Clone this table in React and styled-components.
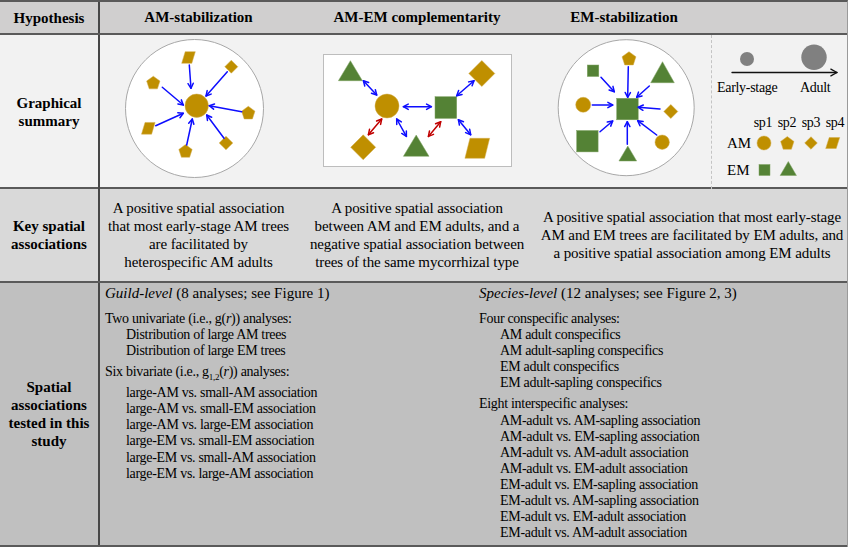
import React from 'react';
import styled, { createGlobalStyle } from 'styled-components';

const GOLD = '#bf8f00';
const GREEN = '#548235';
const BLUE = '#0d0dff';
const RED = '#c00000';
const GREY = '#808080';

const Global = createGlobalStyle`
  html, body { margin: 0; padding: 0; background: #fff; }
  body { font-family: "Liberation Serif", "Times New Roman", Times, serif; color: #000; }
`;

const Table = styled.div`
  width: 847px;
  font-family: "Liberation Serif", "Times New Roman", Times, serif;
  border-top: 2px solid #5a5a5a;
  border-right: 1px solid #9a9a9a;
`;

const Row = styled.div`
  display: grid;
  grid-template-columns: ${(p) => p.$cols};
  height: ${(p) => p.$h}px;
  background: ${(p) => p.$bg};
  border-bottom: 2px solid #5a5a5a;
`;

const LabelCell = styled.div`
  border-right: 2px solid #474747;
  display: flex;
  align-items: center;
  justify-content: center;
  text-align: center;
  font-weight: bold;
  font-size: 15px;
  line-height: 18px;
  white-space: nowrap;
`;

const HeadCell = styled.div`
  display: flex;
  align-items: center;
  justify-content: center;
  font-weight: bold;
  font-size: 15px;
  white-space: nowrap;
`;

const DiagramCell = styled.div`
  padding: ${(p) => p.$pad};
`;

const LegendCell = styled.div`
  border-left: 1px dashed #c4c4c4;
  display: flex;
  flex-direction: column;
`;

const StageLabels = styled.div`
  display: grid;
  grid-template-columns: 83px auto;
  padding-left: 5px;
  height: 16px;
  line-height: 16px;
  font-size: 14px;
  letter-spacing: -0.3px;
  white-space: nowrap;
`;

const SymGrid = styled.div`
  margin-top: 17px;
  padding-left: 15px;
  display: grid;
  grid-template-columns: 24px repeat(4, 24px);
  grid-template-rows: 20px 20px 34px;
  align-items: center;
  justify-items: center;
`;

const SpLabel = styled.span`
  font-size: 14px;
  letter-spacing: -0.3px;
  white-space: nowrap;
`;

const TypeLabel = styled.span`
  justify-self: start;
  font-size: 15px;
`;

const KeyText = styled.div`
  display: flex;
  align-items: center;
  justify-content: center;
  text-align: center;
  font-size: 15px;
  line-height: 18px;
  letter-spacing: -0.1px;
  white-space: nowrap;
  grid-column: ${(p) => (p.$span ? `span ${p.$span}` : 'auto')};
`;

const SpatialCol = styled.div`
  padding: 2px 0 0 ${(p) => p.$pl}px;
`;

const Heading = styled.div`
  font-size: 15px;
  line-height: 17px;
  white-space: nowrap;
`;

const Group = styled.div`
  margin-top: ${(p) => p.$mt}px;
  font-size: 14px;
  letter-spacing: -0.3px;
  line-height: 16.1px;
  white-space: nowrap;
`;

const Item = styled.div`
  padding-left: 21px;
`;

const Sub = styled.sub`
  font-size: 9px;
`;

/* ---------- SVG shape helpers ---------- */
const pts = (arr) => arr.map((p) => p.map((v) => v.toFixed(2)).join(',')).join(' ');
const edge = (c) => (c === GOLD ? '#d2ad4c' : '#7fa263');

const Pentagon = ({ cx, cy, r, c = GOLD }) => {
  const p = [];
  for (let i = 0; i < 5; i++) {
    const a = ((-90 + 72 * i) * Math.PI) / 180;
    p.push([cx + r * Math.cos(a), cy + r * Math.sin(a)]);
  }
  return <polygon points={pts(p)} fill={c} stroke={edge(c)} strokeWidth="0.5" />;
};

const Diamond = ({ cx, cy, r, c = GOLD }) => (
  <polygon
    points={pts([[cx, cy - r], [cx + r, cy], [cx, cy + r], [cx - r, cy]])}
    fill={c}
    stroke={edge(c)}
    strokeWidth="0.5"
  />
);

const Para = ({ cx, cy, w, h, s, c = GOLD }) => (
  <polygon
    points={pts([
      [cx - w / 2 + s, cy - h / 2],
      [cx + w / 2, cy - h / 2],
      [cx + w / 2 - s, cy + h / 2],
      [cx - w / 2, cy + h / 2],
    ])}
    fill={c}
    stroke={edge(c)}
    strokeWidth="0.5"
  />
);

const Tri = ({ cx, top, bot, w, c = GREEN }) => (
  <polygon
    points={pts([[cx, top], [cx + w / 2, bot], [cx - w / 2, bot]])}
    fill={c}
    stroke={edge(c)}
    strokeWidth="0.5"
  />
);

const Sq = ({ x, y, s, c = GREEN }) => (
  <rect x={x} y={y} width={s} height={s} fill={c} stroke={edge(c)} strokeWidth="0.5" />
);

const Dot = ({ cx, cy, r, c = GOLD }) => (
  <circle cx={cx} cy={cy} r={r} fill={c} stroke={c === GREY ? 'none' : edge(c)} strokeWidth="0.5" />
);

const head = (x1, y1, x2, y2, len = 5.5, ang = 0.5) => {
  const a = Math.atan2(y2 - y1, x2 - x1);
  const p1 = [x2 - len * Math.cos(a - ang), y2 - len * Math.sin(a - ang)];
  const p2 = [x2 - len * Math.cos(a + ang), y2 - len * Math.sin(a + ang)];
  return `M${p1[0].toFixed(2)},${p1[1].toFixed(2)} L${x2},${y2} L${p2[0].toFixed(2)},${p2[1].toFixed(2)}`;
};

const Arrow = ({ x1, y1, x2, y2, c = BLUE, both = false, w = 1.5, len = 5.5 }) => (
  <g stroke={c} strokeWidth={w} fill="none" strokeLinecap="round" strokeLinejoin="round">
    <line x1={x1} y1={y1} x2={x2} y2={y2} />
    <path d={head(x1, y1, x2, y2, len)} />
    {both && <path d={head(x2, y2, x1, y1, len)} />}
  </g>
);

/* ---------- Diagrams ---------- */
const DiagramA = () => (
  <svg width="150" height="150" viewBox="0 0 150 150">
    <circle cx="74.5" cy="73.5" r="69" fill="#fff" stroke="#a8a8a8" strokeWidth="1" />
    <Dot cx={76.7} cy={70.7} r={11.7} />
    <Para cx={68.5} cy={22.5} w={13.6} h={11.7} s={3.5} />
    <Diamond cx={111.3} cy={31.7} r={6.5} />
    <Pentagon cx={33.3} cy={48.2} r={7} />
    <Pentagon cx={128.3} cy={78.3} r={7} />
    <Para cx={28.3} cy={93.3} w={13.6} h={11.7} s={3.5} />
    <Pentagon cx={65.5} cy={116.6} r={7} />
    <Diamond cx={106} cy={108} r={6.8} />
    <Arrow x1={69.3} y1={30} x2={71} y2={53.3} />
    <Arrow x1={107.3} y1={36.7} x2={86} y2={61} />
    <Arrow x1={42.3} y1={52.3} x2={63.3} y2={70} />
    <Arrow x1={121.7} y1={76.7} x2={89.3} y2={70.7} />
    <Arrow x1={35.7} y1={90.7} x2={63.3} y2={78.3} />
    <Arrow x1={66.7} y1={110} x2={72.3} y2={84} />
    <Arrow x1={104} y1={103.3} x2={86.7} y2={80} />
  </svg>
);

const DiagramB = () => (
  <svg width="190" height="114" viewBox="0 0 190 114">
    <rect x="0.5" y="0.5" width="188" height="112" fill="#fff" stroke="#bdbdbd" strokeWidth="1" />
    <g transform="translate(1,1)">
      <Tri cx={26.4} top={5.7} bot={25.7} w={24} />
      <Dot cx={63} cy={51} r={12} />
      <Sq x={111} y={41.7} s={21.7} />
      <Diamond cx={157.8} cy={18.5} r={13} />
      <Diamond cx={39.2} cy={92.3} r={12.5} />
      <Tri cx={92.2} top={80} bot={101.3} w={25.6} />
      <Para cx={153.3} cy={93.3} w={24.7} h={20} s={5} />
      <Arrow both x1={39.4} y1={25.7} x2={52.7} y2={40} />
      <Arrow both x1={79.4} y1={51.7} x2={107.4} y2={51.7} />
      <Arrow both x1={132.7} y1={40.7} x2={150} y2={25.7} />
      <Arrow both c={RED} x1={57.7} y1={64} x2={44.4} y2={79.7} />
      <Arrow both x1={72.7} y1={64} x2={82.4} y2={81.4} />
      <Arrow both c={RED} x1={116.7} y1={66.7} x2={104.4} y2={81.4} />
      <Arrow both x1={134.4} y1={64.7} x2={146.7} y2={79.7} />
    </g>
  </svg>
);

const DiagramC = () => (
  <svg width="150" height="150" viewBox="0 0 150 150">
    <circle cx="76.2" cy="72.7" r="68" fill="#fff" stroke="#a8a8a8" strokeWidth="1" />
    <Sq x={66.7} y={63.3} s={21.5} />
    <Sq x={37.3} y={30} s={11.5} />
    <Pentagon cx={79} cy={24} r={7.3} />
    <Tri cx={112.5} top={26.7} bot={47.7} w={23.6} />
    <Dot cx={33.2} cy={69.8} r={7.5} />
    <Diamond cx={120.8} cy={76.5} r={7} />
    <Sq x={26.7} y={95.5} s={21.4} />
    <Tri cx={77.8} top={111} bot={126} w={17.7} />
    <Dot cx={112.2} cy={107.2} r={7.2} />
    <Arrow x1={51} y1={42.3} x2={64.3} y2={56.7} />
    <Arrow x1={78.3} y1={31.7} x2={77.7} y2={62.3} />
    <Arrow x1={99.3} y1={51} x2={86.7} y2={62.3} />
    <Arrow x1={42.3} y1={70} x2={62.7} y2={70} />
    <Arrow x1={110} y1={74} x2={88.3} y2={72.3} />
    <Arrow x1={50} y1={96.7} x2={62.7} y2={86} />
    <Arrow x1={77.3} y1={109.3} x2={77.3} y2={86.7} />
    <Arrow x1={106.7} y1={100} x2={87.7} y2={85.7} />
  </svg>
);

const Icon = ({ children }) => (
  <svg width="20" height="20" viewBox="0 0 20 20">
    {children}
  </svg>
);

const Legend = () => (
  <LegendCell>
    <svg width="135" height="45" viewBox="0 0 135 45">
      <Dot cx={35} cy={24} r={7} c={GREY} />
      <Dot cx={102} cy={22.3} r={12.7} c={GREY} />
      <Arrow c="#111" w={1.3} len={7} x1={20} y1={37.5} x2={125} y2={37.5} />
    </svg>
    <StageLabels>
      <span>Early-stage</span>
      <span>Adult</span>
    </StageLabels>
    <SymGrid>
      <span />
      <SpLabel>sp1</SpLabel>
      <SpLabel>sp2</SpLabel>
      <SpLabel>sp3</SpLabel>
      <SpLabel>sp4</SpLabel>
      <TypeLabel>AM</TypeLabel>
      <Icon><Dot cx={11} cy={10} r={7} /></Icon>
      <Icon><Pentagon cx={10.3} cy={10.6} r={7} /></Icon>
      <Icon><Diamond cx={10} cy={10} r={6.3} /></Icon>
      <Icon><Para cx={7.7} cy={10} w={14} h={11} s={3.5} /></Icon>
      <TypeLabel>EM</TypeLabel>
      <Icon><Sq x={6} y={4.5} s={11} /></Icon>
      <Icon><Tri cx={11.3} top={1.5} bot={15.5} w={16.3} /></Icon>
      <span />
      <span />
    </SymGrid>
  </LegendCell>
);

const COLS = '100px 197px 240px 174px 136px';

export default function App() {
  return (
    <>
      <Global />
      <Table>
        <Row $cols={COLS} $h={31} $bg="#d0cfcf">
          <LabelCell>Hypothesis</LabelCell>
          <HeadCell>AM-stabilization</HeadCell>
          <HeadCell>AM-EM complementarity</HeadCell>
          <HeadCell>EM-stabilization</HeadCell>
          <HeadCell />
        </Row>
        <Row $cols={COLS} $h={152} $bg="#f2f2f2">
          <LabelCell>
            Graphical
            <br />
            summary
          </LabelCell>
          <DiagramCell $pad="0 0 0 20px">
            <DiagramA />
          </DiagramCell>
          <DiagramCell $pad="18.5px 0 0 25.5px">
            <DiagramB />
          </DiagramCell>
          <DiagramCell $pad="0 0 0 13px">
            <DiagramC />
          </DiagramCell>
          <Legend />
        </Row>
        <Row $cols={COLS} $h={92} $bg="#d9d9d9">
          <LabelCell>
            Key spatial
            <br />
            associations
          </LabelCell>
          <KeyText>
            <div>
              A positive spatial association
              <br />
              that most early-stage AM trees
              <br />
              are facilitated by
              <br />
              heterospecific AM adults
            </div>
          </KeyText>
          <KeyText>
            <div>
              A positive spatial association
              <br />
              between AM and EM adults, and a
              <br />
              negative spatial association between
              <br />
              trees of the same mycorrhizal type
            </div>
          </KeyText>
          <KeyText $span={2}>
            <div>
              A positive spatial association that most early-stage
              <br />
              AM and EM trees are facilitated by EM adults, and
              <br />
              a positive spatial association among EM adults
            </div>
          </KeyText>
        </Row>
        <Row $cols="100px 373px 1fr" $h={262} $bg="#c0c0c0">
          <LabelCell>
            Spatial
            <br />
            associations
            <br />
            tested in this
            <br />
            study
          </LabelCell>
          <SpatialCol $pl={5}>
            <Heading>
              <i>Guild-level</i> (8 analyses; see Figure 1)
            </Heading>
            <Group $mt={9}>
              <div>
                Two univariate (i.e., g(<i>r</i>)) analyses:
              </div>
              <Item>Distribution of large AM trees</Item>
              <Item>Distribution of large EM trees</Item>
            </Group>
            <Group $mt={5}>
              <div>
                Six bivariate (i.e., g<Sub>1,2</Sub>(<i>r</i>)) analyses:
              </div>
              <Item>large-AM vs. small-AM association</Item>
              <Item>large-AM vs. small-EM association</Item>
              <Item>large-AM vs. large-EM association</Item>
              <Item>large-EM vs. small-EM association</Item>
              <Item>large-EM vs. small-AM association</Item>
              <Item>large-EM vs. large-AM association</Item>
            </Group>
          </SpatialCol>
          <SpatialCol $pl={6}>
            <Heading>
              <i>Species-level</i> (12 analyses; see Figure 2, 3)
            </Heading>
            <Group $mt={9}>
              <div>Four conspecific analyses:</div>
              <Item>AM adult conspecifics</Item>
              <Item>AM adult-sapling conspecifics</Item>
              <Item>EM adult conspecifics</Item>
              <Item>EM adult-sapling conspecifics</Item>
            </Group>
            <Group $mt={5}>
              <div>Eight interspecific analyses:</div>
              <Item>AM-adult vs. AM-sapling association</Item>
              <Item>AM-adult vs. EM-sapling association</Item>
              <Item>AM-adult vs. AM-adult association</Item>
              <Item>AM-adult vs. EM-adult association</Item>
              <Item>EM-adult vs. EM-sapling association</Item>
              <Item>EM-adult vs. AM-sapling association</Item>
              <Item>EM-adult vs. EM-adult association</Item>
              <Item>EM-adult vs. AM-adult association</Item>
            </Group>
          </SpatialCol>
        </Row>
      </Table>
    </>
  );
}
